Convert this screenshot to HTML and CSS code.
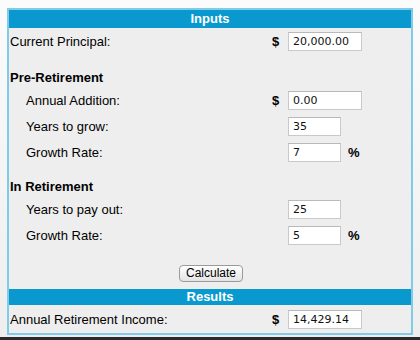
FILE: index.html
```html
<!DOCTYPE html>
<html>
<head>
<meta charset="utf-8">
<link rel="stylesheet" href="styles.css">
</head>
<body>
<div class="page">
  <form class="panel">
    <div class="bar">Inputs</div>
    <div class="row top">
      <span class="label">Current Principal:</span>
      <span class="cur">$</span>
      <span class="cell"><input class="field long" type="text" value="20,000.00"></span>
    </div>
    <div class="heading first">Pre-Retirement</div>
    <div class="row">
      <span class="label indent">Annual Addition:</span>
      <span class="cur">$</span>
      <span class="cell"><input class="field long" type="text" value="0.00"></span>
    </div>
    <div class="row">
      <span class="label indent">Years to grow:</span>
      <span class="cur"></span>
      <span class="cell"><input class="field short" type="text" value="35"></span>
    </div>
    <div class="row">
      <span class="label indent">Growth Rate:</span>
      <span class="cur"></span>
      <span class="cell"><input class="field short" type="text" value="7"><span class="unit">%</span></span>
    </div>
    <div class="heading">In Retirement</div>
    <div class="row">
      <span class="label indent">Years to pay out:</span>
      <span class="cur"></span>
      <span class="cell"><input class="field short" type="text" value="25"></span>
    </div>
    <div class="row">
      <span class="label indent">Growth Rate:</span>
      <span class="cur"></span>
      <span class="cell"><input class="field short" type="text" value="5"><span class="unit">%</span></span>
    </div>
    <div class="actions">
      <button class="btn" type="button">Calculate</button>
    </div>
    <div class="bar results">Results</div>
    <div class="row result">
      <span class="label">Annual Retirement Income:</span>
      <span class="cur">$</span>
      <span class="cell"><input class="field long" type="text" value="14,429.14"></span>
    </div>
  </form>
  <div class="footer"></div>
</div>
</body>
</html>
```
FILE: styles.css
```css
html, body {
  margin: 0;
  padding: 0;
}
body {
  background: #f3f3f3;
  font-family: "Liberation Sans", Arial, sans-serif;
  font-size: 13px;
  color: #000;
}
.page {
  width: 420px;
  height: 340px;
  overflow: hidden;
  display: flex;
  flex-direction: column;
  background: linear-gradient(#fbfbfb, #eeeeee);
}
.panel {
  margin: 8px 0 0 7px;
  width: 406px;
  box-sizing: border-box;
  border: 2px solid #7fcbe8;
  background: #eeeeee;
  display: flex;
  flex-direction: column;
}
.bar {
  background: #0a99cf;
  color: #fff;
  font-weight: bold;
  text-align: center;
  height: 18px;
  line-height: 18px;
  font-size: 13px;
}
.bar.results {
  height: 16px;
  line-height: 16px;
  margin-top: 7px;
}
.row {
  display: flex;
  align-items: center;
  height: 26px;
  padding-right: 49px;
}
.label {
  flex: 1;
  padding-left: 1px;
}
.label.indent {
  padding-left: 17px;
}
.cur {
  width: 16px;
  font-weight: bold;
  font-size: 13px;
}
.cell {
  width: 74px;
  display: flex;
  align-items: center;
  gap: 7px;
}
.field {
  box-sizing: border-box;
  height: 19px;
  margin: 0;
  padding: 0 4px;
  border: 1px solid #c9c9c9;
  border-top-color: #b9b9b9;
  background: #fff;
  font-family: "DejaVu Sans", Verdana, sans-serif;
  font-size: 11px;
  color: #111;
  outline: none;
}
.field.long {
  width: 74px;
}
.field.short {
  width: 53px;
}
.unit {
  font-weight: bold;
}
.heading {
  font-weight: bold;
  height: 18px;
  line-height: 18px;
  margin-top: 13px;
  padding-left: 1px;
}
.heading.first {
  margin-top: 15px;
}
.actions {
  display: flex;
  justify-content: center;
  margin-top: 17px;
  padding-left: 2px;
}
.btn {
  box-sizing: border-box;
  width: 64px;
  height: 17px;
  padding: 0;
  border: 1px solid #9a9a9a;
  border-radius: 4px;
  background: linear-gradient(#ffffff, #e4e4e4);
  font-family: "Liberation Sans", Arial, sans-serif;
  font-size: 12px;
  color: #000;
  line-height: 15px;
}
.row.result {
  height: 28px;
}
.footer {
  margin-top: auto;
  height: 3px;
  background: #2b2b2b;
}
```
